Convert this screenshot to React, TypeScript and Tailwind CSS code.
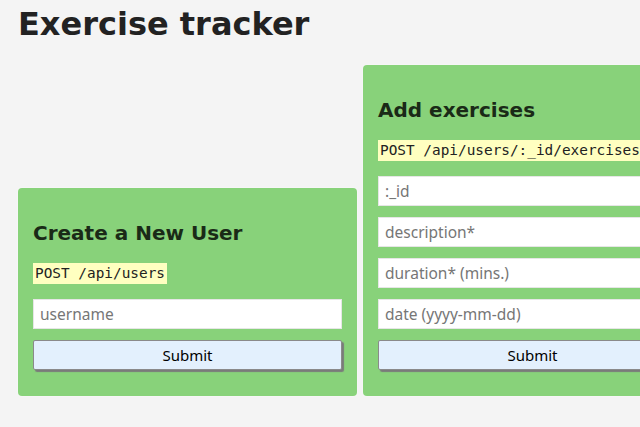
import React from 'react';

const fieldCls =
  "block w-full h-[30px] px-[6px] bg-white border border-[#e6e6e6] text-[15.5px] text-black placeholder:text-[#767676] outline-none";

function Card({ title, endpoint, fields }: { title: string; endpoint: string; fields: string[] }) {
  return (
    <form
      onSubmit={(e) => e.preventDefault()}
      className="w-[339px] shrink-0 bg-[#88d27a] rounded-[4px] pt-[15px] px-[15px] pb-[26px] shadow-[0_0_2px_rgba(255,255,255,0.8)]"
    >
      <h2 className="mt-[18px] text-[20px] leading-[24px] font-bold text-[#1a2a17]">{title}</h2>
      <div className="mt-[15px]">
        <code className="inline-block bg-[#ffffc0] px-[2px] text-[14.4px] leading-[21px] text-[#222] [font-family:'DejaVu_Sans_Mono',monospace] whitespace-nowrap">
          {endpoint}
        </code>
      </div>
      <div className="mt-[15px] flex flex-col gap-[11px]">
        {fields.map((f) => (
          <input key={f} type="text" placeholder={f} className={fieldCls} />
        ))}
      </div>
      <button
        type="submit"
        className="mt-[11px] block w-full h-[30px] bg-[#e3f0fd] border border-[#8a8a8a] rounded-[2px] text-[15px] text-black shadow-[2px_2px_1px_#7a7a7a]"
      >
        Submit
      </button>
    </form>
  );
}

export default function App() {
  return (
    <div className="min-h-screen bg-[#f4f4f4] overflow-hidden [font-family:'Noto_Sans',sans-serif]">
      <h1 className="pt-[4px] px-[18px] text-[32px] leading-[40px] font-bold text-[#222] [font-family:'DejaVu_Sans',sans-serif]">
        Exercise tracker
      </h1>
      <div className="mt-[21px] px-[18px] flex items-end gap-[6px] [&_h2]:[font-family:'DejaVu_Sans',sans-serif]">
        <Card title="Create a New User" endpoint="POST /api/users" fields={["username"]} />
        <Card
          title="Add exercises"
          endpoint="POST /api/users/:_id/exercises"
          fields={[":_id", "description*", "duration* (mins.)", "date (yyyy-mm-dd)"]}
        />
      </div>
    </div>
  );
}
